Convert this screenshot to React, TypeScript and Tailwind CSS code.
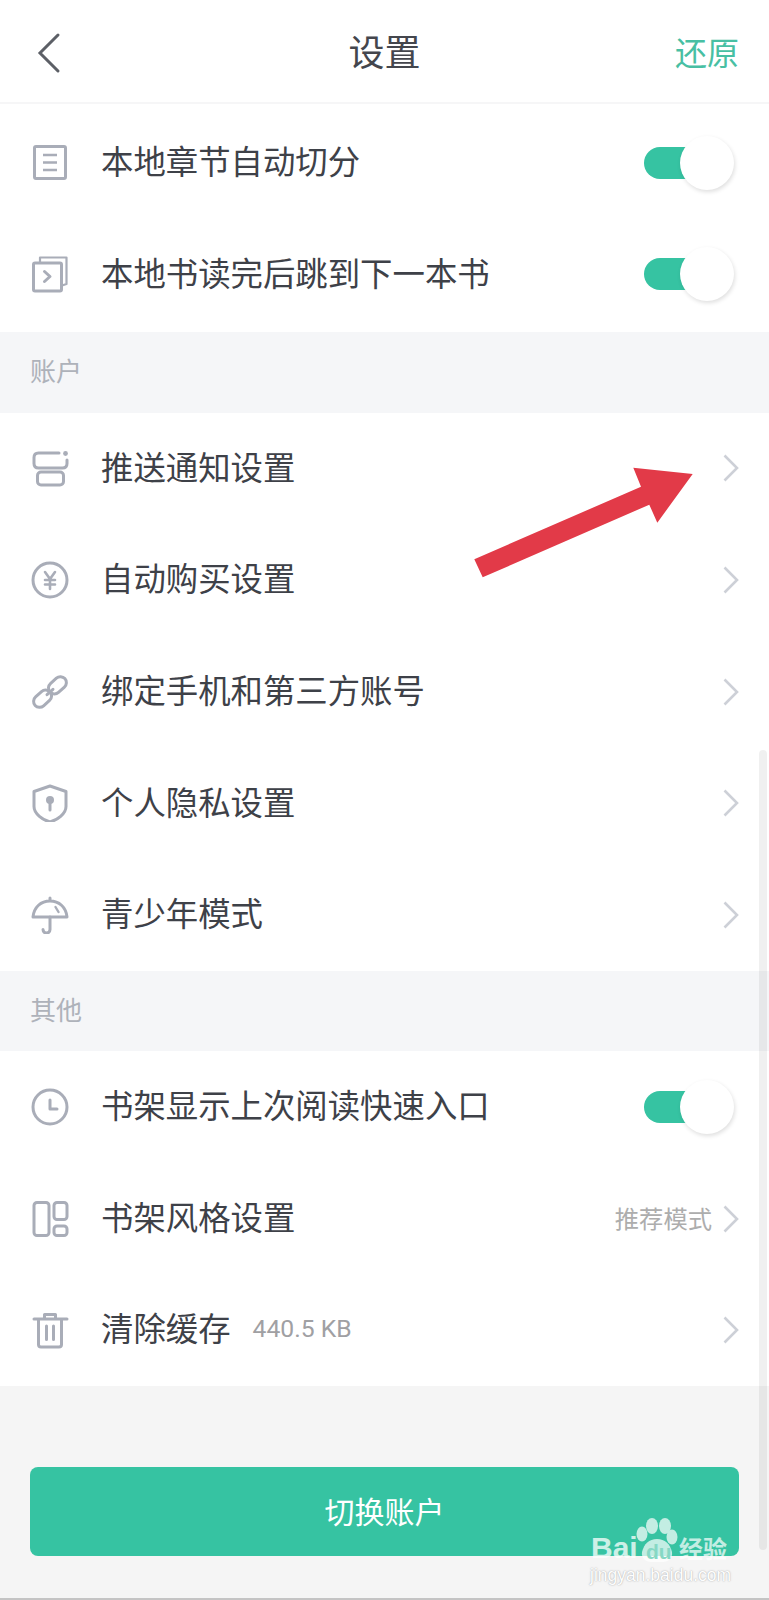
import React from "react";

const S = "#a9adb8";

function Ico({ children }: { children: React.ReactNode }) {
  return (
    <svg width="38" height="38" viewBox="0 0 38 38" fill="none" stroke={S} strokeWidth="3" strokeLinecap="round" strokeLinejoin="round" className="shrink-0">
      {children}
    </svg>
  );
}

const DocIcon = () => (
  <Ico>
    <rect x="3.5" y="2.5" width="31" height="32" rx="1.5" />
    <path d="M12 11h14M12 18.500h14M12 26h14" strokeWidth="2.400" strokeLinecap="butt" />
  </Ico>
);
const CopyIcon = () => (
  <Ico>
    <rect x="2.500" y="8" width="28" height="28" rx="1.500" />
    <path d="M9 7.500V2.500h26.500v26.500l-4.500 1.500" strokeWidth="2.200" />
    <path d="M13.500 16.500l5.500 5-5.500 5" />
  </Ico>
);
const PushIcon = () => (
  <Ico>
    <path d="M28 4H7.500Q3 4 3 8.500v6Q3 19 7.500 19h24q4.500 0 4.500-4.500V11" />
    <rect x="6.500" y="23" width="26" height="13" rx="3.500" />
    <circle cx="34.500" cy="4.500" r="2.400" fill={S} stroke="none" />
  </Ico>
);
const YenIcon = () => (
  <Ico>
    <circle cx="19" cy="19" r="17" />
    <path d="M14 11l5 7 5-7M14 19h10M14 23.500h10M19 18v10" strokeWidth="2.600" />
  </Ico>
);
const LinkIcon = () => (
  <Ico>
    <g transform="rotate(-42 19 19)">
      <rect x="-1" y="13" width="20" height="12" rx="6" />
      <rect x="19" y="13" width="20" height="12" rx="6" />
      <path d="M15 19h8" />
    </g>
  </Ico>
);
const ShieldIcon = () => (
  <Ico>
    <path d="M19 2l16 5.500v15C35 30 26 36 19 38 12 36 3 30 3 22.500v-15z" />
    <circle cx="19" cy="16" r="4" fill={S} stroke="none" />
    <path d="M19 17v9" />
  </Ico>
);
const UmbrellaIcon = () => (
  <Ico>
    <path d="M19 2v3M2 21C3 11 10 5 19 5s16 6 17 16z" />
    <path d="M19 21v12.500q0 3.500-3.500 3.500T12 33.500" />
    <path d="M24.500 11l3 5" strokeWidth="2.400" />
  </Ico>
);
const ClockIcon = () => (
  <Ico>
    <circle cx="19" cy="19" r="17" />
    <path d="M19 12v9h7" />
  </Ico>
);
const ShelfIcon = () => (
  <Ico>
    <rect x="3" y="2.500" width="15" height="33" rx="3" />
    <rect x="23" y="2.500" width="13" height="17" rx="3" />
    <rect x="23" y="26" width="13" height="9.500" rx="3" />
  </Ico>
);
const TrashIcon = () => (
  <Ico>
    <path d="M3 8h33M13.500 8V3.500h11V8M7.500 8v25.500q0 2.500 2.500 2.500h18q2.500 0 2.500-2.500V8M15.500 15v13.500M22.500 15v13.500" />
  </Ico>
);

const Chevron = () => (
  <svg width="16" height="28" viewBox="0 0 16 28" fill="none" stroke="#cdd0d7" strokeWidth="2.600" className="shrink-0">
    <path d="M1.500 1.500L14 14 1.500 26.500" />
  </svg>
);

function Toggle() {
  return (
    <div className="relative h-[54px] w-[91px] shrink-0">
      <div className="absolute left-0 top-[11px] h-[32px] w-[70px] rounded-l-full bg-[#36c3a2]" />
      <div className="absolute left-[36px] top-0 h-[54px] w-[54px] rounded-full bg-white shadow-[1px_2px_4px_rgba(0,0,0,0.13)]" />
    </div>
  );
}

function Row({ icon, label, note, value, toggle }: { icon: React.ReactNode; label: string; note?: string; value?: string; toggle?: boolean }) {
  return (
    <div className="flex h-[111.600px] items-center pl-[31px]">
      {icon}
      <span className="-mt-[5px] ml-[32px] text-[32.400px] leading-none text-[#3e4148]">{label}</span>
      {note && <span className="-mt-[1px] ml-[22px] font-['Roboto',sans-serif] text-[24.700px] leading-none text-[#a0a0a3]">{note}</span>}
      <div className="ml-auto flex items-center">
        {value && <span className="mr-[11px] text-[24.300px] leading-none text-[#adadad]">{value}</span>}
        {toggle ? (
          <div className="mr-[34px]">
            <Toggle />
          </div>
        ) : (
          <div className="mr-[30px]">
            <Chevron />
          </div>
        )}
      </div>
    </div>
  );
}

function SectionLabel({ children }: { children: string }) {
  return (
    <div className="flex h-[80.500px] items-center bg-[#f5f6f8] pb-[4px] pl-[30px] text-[26px] leading-none text-[#aeb2ba]">
      {children}
    </div>
  );
}

export default function App() {
  return (
    <div className="relative h-[1600px] w-[769px] overflow-hidden bg-[#f5f5f5] font-['Noto_Sans_CJK_SC','Noto_Sans',sans-serif]">
      <header className="relative flex h-[104px] items-center justify-center border-b-2 border-[#f6f6f7] bg-white">
        <svg width="26" height="42" viewBox="0 0 26 42" fill="none" stroke="#5c5f66" strokeWidth="3" className="absolute left-[36px] top-[32px]">
          <path d="M22 3L4 21l18 18" strokeLinecap="round" />
        </svg>
        <span className="-mt-[2px] text-[36px] leading-none text-[#44464d]">设置</span>
        <span className="absolute right-[30px] top-[35px] text-[32px] leading-none text-[#48bfa3]">还原</span>
      </header>

      <section className="bg-white pb-[2px] pt-[3px]">
        <Row icon={<DocIcon />} label="本地章节自动切分" toggle />
        <Row icon={<CopyIcon />} label="本地书读完后跳到下一本书" toggle />
      </section>

      <SectionLabel>账户</SectionLabel>
      <section className="bg-white">
        <Row icon={<PushIcon />} label="推送通知设置" />
        <Row icon={<YenIcon />} label="自动购买设置" />
        <Row icon={<LinkIcon />} label="绑定手机和第三方账号" />
        <Row icon={<ShieldIcon />} label="个人隐私设置" />
        <Row icon={<UmbrellaIcon />} label="青少年模式" />
      </section>

      <SectionLabel>其他</SectionLabel>
      <section className="bg-white">
        <Row icon={<ClockIcon />} label="书架显示上次阅读快速入口" toggle />
        <Row icon={<ShelfIcon />} label="书架风格设置" value="推荐模式" />
        <Row icon={<TrashIcon />} label="清除缓存" note="440.5 KB" />
      </section>

      <div className="px-[30px] pt-[81px]">
        <button className="flex h-[89px] w-[709px] items-center justify-center rounded-[8px] bg-[#36c3a2] pb-[2px] text-[30px] leading-none text-white">
          切换账户
        </button>
      </div>

      <div className="absolute bottom-0 left-0 h-[2px] w-full bg-[#c4c4c4]" />

      <div className="absolute right-[2px] top-[750px] h-[800px] w-[8px] rounded-full bg-[#0000000f]" />

      <svg width="769" height="1600" viewBox="0 0 769 1600" className="pointer-events-none absolute left-0 top-0">
        <polygon
          points="474.300,559.300 482.700,577.300 649.300,504.700 657.300,522.700 692.700,474 633.300,467.700 641,486.700"
          fill="#e23a48"
        />
      </svg>

      <div className="pointer-events-none absolute left-[590px] top-[1518px] h-[70px] w-[142px] text-white">
        <svg width="142" height="46" viewBox="0 0 142 46" className="absolute left-0 top-0 opacity-70">
          <g fill="#ffffff">
            <ellipse cx="62" cy="8" rx="6" ry="8" />
            <ellipse cx="75" cy="8" rx="6" ry="8" />
            <ellipse cx="52" cy="16" rx="5.500" ry="7.500" />
            <ellipse cx="82" cy="19" rx="5.500" ry="7.500" />
            <path d="M52 34c2-8 7-13 15-13s13 5 15 13c1 6-4 10-9 10H61c-5 0-10-4-9-10z" />
          </g>
        </svg>
        <span className="absolute left-[1px] top-[15px] font-['Liberation_Sans',sans-serif] text-[30px] font-bold leading-none opacity-75">Bai</span>
        <span className="absolute left-[56px] top-[23px] font-['Liberation_Sans',sans-serif] text-[21px] font-bold leading-none text-[#86d8c5]">du</span>
        <span className="absolute left-[89px] top-[18px] text-[24px] font-bold leading-none opacity-70">经验</span>
        <span className="absolute left-0 top-[49px] whitespace-nowrap font-['Liberation_Sans',sans-serif] text-[17.500px] leading-none opacity-90 [text-shadow:0_0_1.500px_rgba(130,130,130,0.9)]">jingyan.baidu.com</span>
      </div>
    </div>
  );
}
